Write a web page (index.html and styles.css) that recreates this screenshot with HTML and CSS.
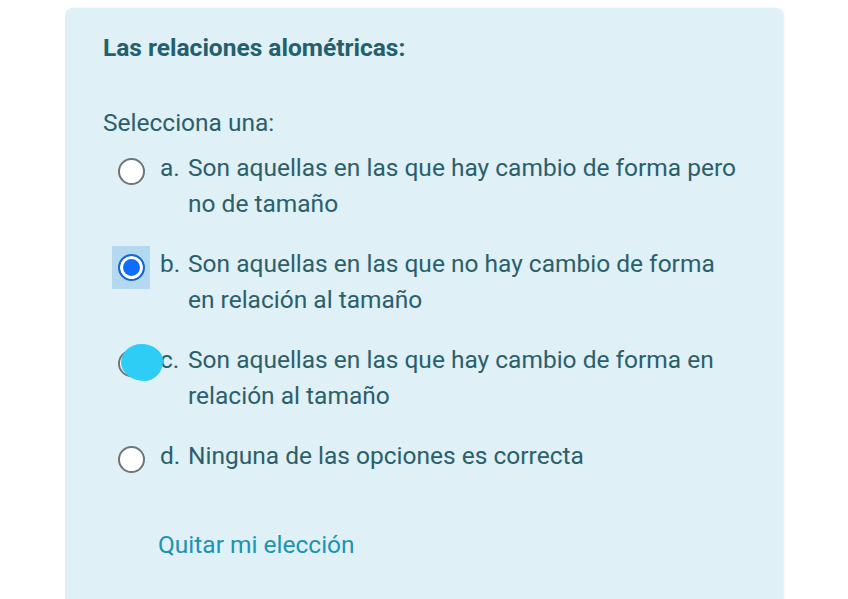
FILE: index.html
```html
<!DOCTYPE html>
<html lang="es">
<head>
<meta charset="utf-8">
<title>Pregunta</title>
<link rel="stylesheet" href="styles.css">
</head>
<body>
<div class="card">
  <div class="title">Las relaciones alométricas:</div>
  <div class="prompt">Selecciona una:</div>
  <div class="answers">
    <div class="option">
      <div class="radio-wrap"><span class="radio"></span></div>
      <div class="label"><span class="letter">a.</span><span class="text">Son aquellas en las que hay cambio de forma pero no de tamaño</span></div>
    </div>
    <div class="option">
      <div class="radio-wrap focused"><span class="radio checked"></span></div>
      <div class="label"><span class="letter">b.</span><span class="text">Son aquellas en las que no hay cambio de forma en relación al tamaño</span></div>
    </div>
    <div class="option">
      <div class="radio-wrap"><span class="radio"></span><span class="blob"></span></div>
      <div class="label"><span class="letter">c.</span><span class="text">Son aquellas en las que hay cambio de forma en relación al tamaño</span></div>
    </div>
    <div class="option">
      <div class="radio-wrap"><span class="radio"></span></div>
      <div class="label"><span class="letter">d.</span><span class="text">Ninguna de las opciones es correcta</span></div>
    </div>
  </div>
  <div class="clear">Quitar mi elección</div>
</div>
</body>
</html>
```
FILE: styles.css
```css
html, body {
  margin: 0;
  padding: 0;
  background: #ffffff;
}
body {
  font-family: Roboto, "Noto Sans", sans-serif;
  color: #2b5f6b;
  height: 599px;
  overflow: hidden;
}
.card {
  margin: 8px 0 0 65px;
  width: 718px;
  height: 620px;
  box-sizing: border-box;
  background: #dff0f6;
  border-radius: 8px 8px 0 0;
  box-shadow: 1px 0 2px rgba(150, 180, 200, 0.25);
  padding: 22px 38px 0 38px;
}
.title {
  font-size: 24.5px;
  font-weight: 700;
  line-height: 36px;
  color: #23606c;
}
.prompt {
  font-size: 24.5px;
  line-height: 36px;
  margin-top: 39px;
}
.answers {
  margin-top: 9px;
  display: flex;
  flex-direction: column;
  gap: 24px;
}
.option {
  display: flex;
  align-items: flex-start;
  margin-left: 9px;
}
.radio-wrap {
  position: relative;
  width: 38px;
  height: 43px;
  flex: none;
  display: flex;
  align-items: center;
  justify-content: center;
  margin-right: 10px;
}
.radio-wrap.focused {
  background: #b3d8ef;
}
.radio {
  width: 23px;
  height: 23px;
  border-radius: 50%;
  border: 2px solid #6f7476;
  background: #ffffff;
}
.radio.checked {
  border-color: #1667c9;
  background: #0d6efd;
  box-shadow: inset 0 0 0 3px #ffffff;
}
.blob {
  position: absolute;
  left: 9px;
  top: 2px;
  width: 42px;
  height: 37px;
  background: #2ecdf5;
  border-radius: 48% 52% 45% 55% / 50% 46% 54% 50%;
}
.label {
  display: flex;
  font-size: 24.5px;
  line-height: 36px;
  width: 586px;
}
.letter {
  flex: none;
  width: 28px;
}
.text {
  flex: 1;
}
.clear {
  margin-top: 46px;
  margin-left: 55px;
  font-size: 24.5px;
  line-height: 36px;
  color: #1b93b3;
}
```
